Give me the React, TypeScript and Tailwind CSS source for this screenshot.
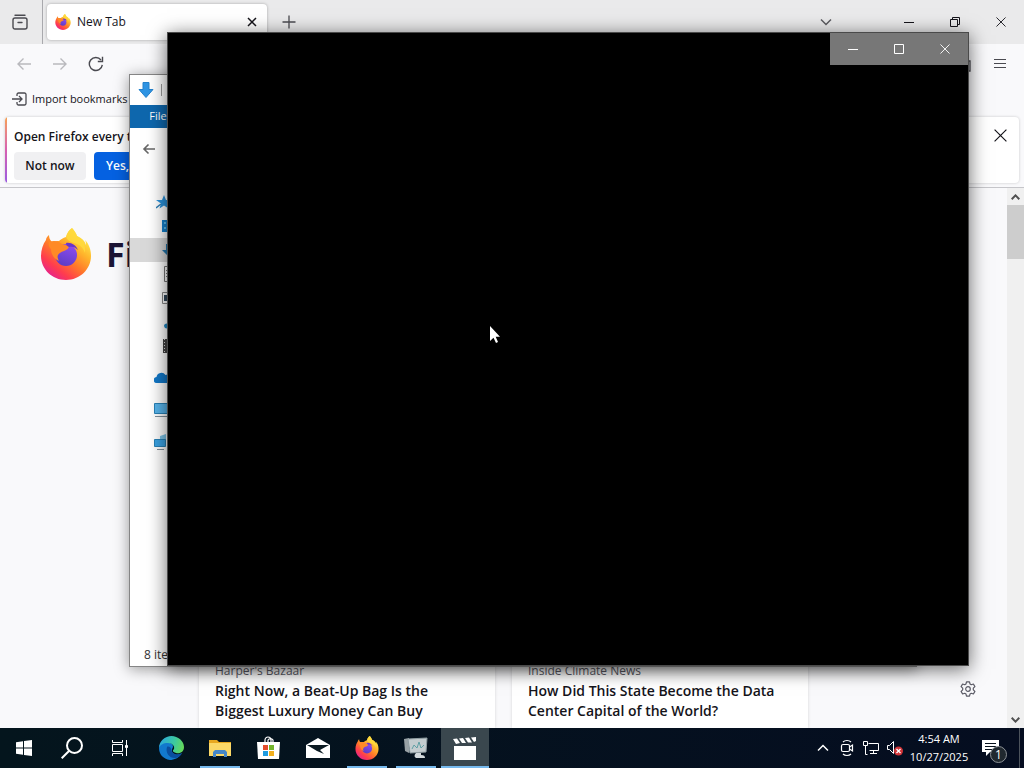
import React from "react";

interface IconProps {
  className?: string;
}

const FirefoxLogo = ({ className, id }: IconProps & { id: string }) => (
  <svg viewBox="0 0 52 52" className={className} aria-hidden="true">
    <defs>
      <linearGradient id={`${id}-body`} x1="0.85" y1="0.1" x2="0.2" y2="0.95">
        <stop offset="0" stopColor="#fff14f" />
        <stop offset="0.3" stopColor="#ffb52b" />
        <stop offset="0.55" stopColor="#ff7a2a" />
        <stop offset="0.8" stopColor="#ff3c4e" />
        <stop offset="1" stopColor="#e5238e" />
      </linearGradient>
      <linearGradient id={`${id}-globe`} x1="0.7" y1="0" x2="0.3" y2="1">
        <stop offset="0" stopColor="#8f4cf0" />
        <stop offset="1" stopColor="#5a3cc4" />
      </linearGradient>
    </defs>
    <path
      fill={`url(#${id}-body)`}
      d="M32 0c2 2 4 5 5 8 5 2 8 5 9 9 0-2 0-3-1-5 4 4 6 10 6 16 0 13-11 24-25 24S1 41 1 28c0-6 2-12 5-16 0-2 1-3 3-5 0 3 1 5 3 7 2-1 5-1 7-1 2-2 4-3 7-4 1-4 3-7 6-9z"
    />
    <circle cx="26" cy="27" r="11" fill={`url(#${id}-globe)`} />
    <path
      fill="#ff8a26"
      d="M9 14c5-2 9-1 13 2 2 1 5 1 7 2 0 2-2 4-5 5-3 1-5 2-6 4-1 2 0 4 1 6-5-2-8-7-8-12-2-2-3-4-2-7z"
    />
    <path fill="#ffd93c" d="M32 0c2 2 4 5 5 8 6 3 9 9 8 17-2-6-6-9-11-10-4-1-7-3-8-6 1-4 3-7 6-9z" opacity="0.85" />
    <path fill="#6a34c9" d="M26 15c5-1 10 2 12 7-3-3-6-4-9-3-2-1-3-2-3-4z" />
  </svg>
);

const Minimize = () => (
  <svg width="10" height="11" viewBox="0 0 10 11" stroke="currentColor">
    <path d="M0 5.500h10" />
  </svg>
);

const Close = ({ size = 10 }: { size?: number }) => (
  <svg width={size} height={size} viewBox="0 0 11 11" fill="none" stroke="currentColor">
    <path d="M.5.5l10 10M10.500.5l-10 10" />
  </svg>
);

const Chevron = ({ className }: IconProps) => (
  <svg width="12" height="8" viewBox="0 0 12 8" fill="none" stroke="currentColor" strokeWidth="1.500" className={className}>
    <path d="M1 1.500l5 5 5-5" />
  </svg>
);

const BackArrow = ({ className }: IconProps) => (
  <svg width="16" height="14" viewBox="0 0 16 14" fill="none" stroke="currentColor" strokeWidth="1.400" className={className}>
    <path d="M15 7H2M7.500 1.500L2 7l5.500 5.500" />
  </svg>
);

const TabBar = () => (
  <div className="flex h-11 shrink-0 bg-[#eaeaeb]">
    <button className="flex w-10 items-center justify-center text-[#4a4a50]" aria-label="Firefox View">
      <svg width="16" height="16" viewBox="0 0 16 16" fill="none" stroke="currentColor" strokeWidth="1.400">
        <path d="M3 1.200h10" strokeLinecap="round" />
        <rect x="1" y="4" width="14" height="11" rx="2" />
        <path d="M6 8.500h4" strokeLinecap="round" />
      </svg>
    </button>
    <div className="ml-0.5 w-px bg-[#a9a9ad]" />
    <div className="ml-1 mt-1 flex h-9 w-[220px] items-center rounded bg-white pl-2 pr-2.5 shadow-[0_0_3px_rgba(0,0,0,0.3)]">
      <FirefoxLogo id="tab" className="h-4 w-4" />
      <span className="ml-1.5 flex-1 text-[12px]">New Tab</span>
      <button aria-label="Close tab">
        <svg width="10" height="10" viewBox="0 0 10 10" stroke="currentColor" strokeWidth="1.500">
          <path d="M1 1l8 8M9 1L1 9" />
        </svg>
      </button>
    </div>
    <button className="ml-1 flex w-9 items-center justify-center" aria-label="New tab">
      <svg width="14" height="14" viewBox="0 0 14 14" stroke="#4a4a50" strokeWidth="1.300">
        <path d="M7 .5v13M.5 7h13" />
      </svg>
    </button>
    <div className="ml-auto flex">
      <button className="mr-10 flex w-10 items-center justify-center text-[#5b5b60]" aria-label="List all tabs">
        <Chevron />
      </button>
      <button className="flex w-[46px] items-center justify-center" aria-label="Minimize">
        <Minimize />
      </button>
      <button className="flex w-[46px] items-center justify-center" aria-label="Restore">
        <svg width="10" height="10" viewBox="0 0 10 10" fill="none" stroke="currentColor">
          <path d="M.5 2.500h7v7h-7zM2.500 2.500v-2h7v7h-2" />
        </svg>
      </button>
      <button className="flex w-[46px] items-center justify-center" aria-label="Close">
        <Close />
      </button>
    </div>
  </div>
);

const NavBar = () => (
  <div className="flex h-10 shrink-0 items-center pl-4 pr-[18px]">
    <button className="text-[#b9b9bd]" aria-label="Back">
      <BackArrow />
    </button>
    <button className="ml-5 text-[#b9b9bd]" aria-label="Forward">
      <BackArrow className="rotate-180" />
    </button>
    <button className="ml-5 text-[#4a4a50]" aria-label="Reload">
      <svg width="16" height="16" viewBox="0 0 16 16" fill="none" stroke="currentColor" strokeWidth="1.400">
        <path d="M14.300 8.800A6.500 6.500 0 1 1 13 4" />
        <path d="M14.500.8v4.700H9.800" />
      </svg>
    </button>
    <button className="ml-auto mr-[22px] text-[#4a4a50]" aria-label="Extensions">
      <svg width="16" height="16" viewBox="0 0 16 16" fill="none" stroke="currentColor" strokeWidth="1.300">
        <path d="M1 5h4V3a2 2 0 0 1 4 0v2h5v10H1v-3h2a2 2 0 0 0 0-4H1z" />
      </svg>
    </button>
    <button className="text-[#4a4a50]" aria-label="Open application menu">
      <svg width="12" height="12" viewBox="0 0 12 12" stroke="currentColor">
        <path d="M0 1.500h12M0 5.500h12M0 9.500h12" />
      </svg>
    </button>
  </div>
);

const Bookmarks = () => (
  <div className="flex h-[30px] shrink-0 items-center pl-3">
    <button className="flex items-center gap-1">
      <svg width="16" height="14" viewBox="0 0 16 14" fill="none" stroke="#4a4a50" strokeWidth="1.300">
        <path d="M5 4V2.500A1.500 1.500 0 0 1 6.500 1h6A1.500 1.500 0 0 1 14 2.500v9a1.500 1.500 0 0 1-1.500 1.500h-6A1.500 1.500 0 0 1 5 11.500V10M0 7h9.500M7 4l3 3-3 3" />
      </svg>
      <span className="text-[11px]">Import bookmarks</span>
    </button>
  </div>
);

const Notice = () => (
  <div className="shrink-0 border-b border-[#c6c6ca] px-[5px] pb-1 pt-[3px]">
    <div className="flex h-[66px] overflow-hidden rounded bg-white shadow-[0_0_3px_rgba(0,0,0,0.2)]">
      <div className="w-0.5 bg-linear-to-b from-[#f7a04c] via-[#d75fb0] to-[#9a59e0]" />
      <div className="ml-[7px] pt-2.5">
        <p className="text-[12px] font-semibold leading-5">Open Firefox every time</p>
        <div className="mt-[5px] flex gap-2 text-[12px] font-semibold">
          <button className="h-7 w-[72px] rounded bg-[#f0f0f2]">Not now</button>
          <button className="h-7 rounded bg-[#0561e1] px-3 text-white">Yes,</button>
        </div>
      </div>
      <button className="mb-auto ml-auto mr-3 mt-3" aria-label="Dismiss">
        <Close size={13} />
      </button>
    </div>
  </div>
);

const stories = [
  { source: "Harper's Bazaar", title: "Right Now, a Beat-Up Bag Is the Biggest Luxury Money Can Buy" },
  { source: "Inside Climate News", title: "How Did This State Become the Data Center Capital of the World?" },
];

const NewTabPage = () => (
  <div className="flex min-h-0 flex-1">
    <main className="relative flex min-w-0 flex-1 flex-col bg-[#f9f9fb]">
      <div className="flex items-center gap-[14px] pl-10 pt-10">
        <FirefoxLogo id="page" className="h-[52px] w-[52px]" />
        <span className="text-[34px] font-bold leading-[50px] text-[#1c1535]">Firefox</span>
      </div>
      <div className="mx-auto mt-auto grid w-full max-w-[609px] grid-cols-2 gap-[17px]">
        {stories.map((story) => (
          <article key={story.title} className="bg-white px-4 pb-[7px] pt-8 shadow-[0_0_3px_rgba(0,0,0,0.15)]">
            <p className="text-[12px] leading-5 text-[#5b5b66]">{story.source}</p>
            <h3 className="text-[14px] font-semibold leading-5 text-[#15141a]">{story.title}</h3>
          </article>
        ))}
      </div>
      <button className="absolute bottom-[31px] right-[31px] text-[#5b5b66]" aria-label="Customize">
        <svg width="16" height="16" viewBox="0 0 16 16" fill="none" stroke="currentColor" strokeWidth="1.200" strokeLinejoin="round">
          <path d="M6.500.8h3l.5 2.100 1.300.8 2.100-.7 1.500 2.600L13.300 7.200v1.600l1.600 1.600-1.500 2.600-2.100-.7-1.300.8-.5 2.100h-3L6 13.100l-1.300-.8-2.100.7-1.500-2.600 1.600-1.600V7.200L1.100 5.600 2.600 3l2.100.7L6 2.900z" />
          <circle cx="8" cy="8" r="2.300" />
        </svg>
      </button>
    </main>
    <div className="flex w-[17px] flex-col items-center justify-between bg-[#f0f0f0] text-[#505050]">
      <div className="flex w-full flex-col items-center">
        <button className="flex h-[17px] items-center" aria-label="Scroll up">
          <svg width="9" height="6" viewBox="0 0 9 6" fill="none" stroke="currentColor" strokeWidth="2">
            <path d="M.7 5.200l3.800-3.800 3.800 3.800" />
          </svg>
        </button>
        <div className="h-[54px] w-full bg-[#cdcdcd]" />
      </div>
      <button className="flex h-[17px] items-center" aria-label="Scroll down">
        <svg width="9" height="6" viewBox="0 0 9 6" fill="none" stroke="currentColor" strokeWidth="2">
          <path d="M.7.8l3.800 3.800L8.300.8" />
        </svg>
      </button>
    </div>
  </div>
);

const Browser = () => (
  <div className="flex min-h-0 flex-1 flex-col bg-[#f9f9fb] text-[#15141a]">
    <TabBar />
    <NavBar />
    <Bookmarks />
    <Notice />
    <NewTabPage />
  </div>
);

const treeIcons = {
  star: (
    <>
      <path fill="#2b93dc" d="M8 1l2 5h5l-4 3.500 1.500 5L8 11.500 3.500 14.500 5 9.500 0 6h6z" />
      <path stroke="#2b7fb8" strokeWidth="1.500" d="M0 14l5-4" />
    </>
  ),
  desktop: (
    <>
      <path fill="#1583d0" d="M0 2h16v12H0z" />
      <path fill="#5cc0f5" d="M2 4h2v2H2zM2 9h2v2H2z" />
    </>
  ),
  download: <path fill="#2478ae" d="M0 8h4V2h6v6h4l-7 7z" />,
  document: <path fill="#fff" stroke="#777" d="M2.500.5h11v15h-11zM4 4.500h7M4 7.500h7M4 10.500h7" />,
  picture: (
    <>
      <path fill="#fff" stroke="#888" d="M.5 2.500h15v11H.5z" />
      <path fill="#34495b" d="M2 5h12v6H2z" />
    </>
  ),
  music: <path fill="#218bc7" d="M2 12a3 2.500 0 1 1 3 2.500A3 3 0 0 1 2 12zM9 2h2v8H9z" />,
  video: (
    <>
      <path fill="#444" d="M1 1h14v14H1z" />
      <path stroke="#ddd" strokeDasharray="1 2" d="M2.500 1v14" />
    </>
  ),
  cloud: <path fill="#1278c8" d="M3 13a3 3 0 0 1-.500-6 5 5 0 0 1 9-2 4 4 0 0 1 3.500 8z" />,
  pc: (
    <>
      <path fill="#58b5ec" stroke="#2881b5" d="M.5 1.500h15v10H.5z" />
      <path stroke="#81909b" d="M1 14.500h14" />
    </>
  ),
  network: (
    <>
      <path fill="#7dc4e8" d="M6 2l6-2v12H6z" />
      <path fill="#3aa2e3" stroke="#2881b5" d="M.5 5.500h11v7H.5z" />
      <path stroke="#81909b" d="M3 15.500h7" />
    </>
  ),
};

interface TreeItem {
  icon: keyof typeof treeIcons;
  className: string;
}

const tree: TreeItem[] = [
  { icon: "star", className: "pl-[26px]" },
  { icon: "desktop", className: "pl-8" },
  { icon: "download", className: "pl-8 bg-[#d9d9d9]" },
  { icon: "document", className: "pl-8" },
  { icon: "picture", className: "pl-8" },
  { icon: "music", className: "pl-8" },
  { icon: "video", className: "pl-8" },
  { icon: "cloud", className: "mt-2 pl-6" },
  { icon: "pc", className: "mt-2 pl-6" },
  { icon: "network", className: "mt-2 pl-6" },
];

const Explorer = () => (
  <section className="absolute left-[129px] top-[74px] flex h-[593px] w-[788px] flex-col border border-[#858585] bg-white shadow-[0_2px_14px_rgba(0,0,0,0.4)]">
    <div className="flex h-[30px] items-center pl-2">
      <svg width="16" height="16" viewBox="0 0 16 16" fill="#2f95e4" stroke="#2482cd">
        <path d="M5 .5h6v7h4L8 15.500 1 7.500h4z" />
      </svg>
      <div className="ml-[7px] h-3 w-px bg-[#9a9a9a]" />
    </div>
    <div className="flex h-[23px] text-[11px] text-white">
      <button className="w-14 bg-[#0e67ad]">File</button>
    </div>
    <div className="flex h-[42px] items-center pl-3 text-[#666]">
      <button aria-label="Back">
        <svg width="14" height="12" viewBox="0 0 14 12" fill="none" stroke="currentColor" strokeWidth="1.600">
          <path d="M13 6H2M6.500 1.500L2 6l4.500 4.500" />
        </svg>
      </button>
    </div>
    <ul className="mt-5 flex-1">
      {tree.map((item) => (
        <li key={item.icon} className={`flex h-6 w-[200px] items-center ${item.className}`}>
          <svg width="16" height="16" viewBox="0 0 16 16">
            {treeIcons[item.icon]}
          </svg>
        </li>
      ))}
    </ul>
    <div className="flex h-[22px] items-center pl-3.5 text-[12px] text-[#333]">8 items</div>
  </section>
);

const VideoWindow = () => (
  <section className="absolute left-[167px] top-8 h-[634px] w-[802px] border border-[#4a4a4a] bg-black shadow-[0_3px_18px_rgba(0,0,0,0.6)]">
    <div className="flex h-8 justify-end text-white">
      <button className="flex w-[46px] items-center justify-center bg-[#777]" aria-label="Minimize">
        <Minimize />
      </button>
      <button className="flex w-[46px] items-center justify-center bg-[#777]" aria-label="Maximize">
        <svg width="10" height="10" viewBox="0 0 10 10" fill="none" stroke="currentColor">
          <path d="M.5.5h9v9h-9z" />
        </svg>
      </button>
      <button className="flex w-[46px] items-center justify-center bg-[#777]" aria-label="Close">
        <Close />
      </button>
    </div>
  </section>
);

const Cursor = () => (
  <svg className="absolute left-[489px] top-[325px]" width="12" height="19" viewBox="0 0 12 19" aria-hidden="true">
    <path fill="#fff" d="M1 1v15l3.500-3.300L7 18l2-.900-2.300-5.300H11z" />
  </svg>
);

const StartIcon = () => (
  <svg width="16" height="16" viewBox="0 0 16 16" fill="#fff">
    <path d="M0 2.200l7-1v6.300H0zM8 1.100L16 0v7.500H8zM0 8.500h7v6.300l-7-1zM8 8.500h8V16l-8-1.100z" />
  </svg>
);

const SearchIcon = () => (
  <svg width="22" height="22" viewBox="0 0 22 22" fill="none" stroke="#fff" strokeWidth="2">
    <circle cx="13.500" cy="8.500" r="7.500" />
    <path d="M8 14l-7.300 7.300" />
  </svg>
);

const TaskViewIcon = () => (
  <svg width="16" height="16" viewBox="0 0 16 16" fill="none" stroke="#fff">
    <path d="M.5 0v2.500h10V0M.5 16v-2.500h10V16M.5 4.500h10v7H.5zM14.500 0v16" />
    <path fill="#fff" d="M13.500 5.500h2v2h-2z" />
  </svg>
);

const EdgeIcon = () => (
  <svg width="25" height="24" viewBox="0 0 25 24">
    <defs>
      <linearGradient id="edge-top" x1="0" y1="0.300" x2="1" y2="0.500">
        <stop offset="0" stopColor="#2aa7e0" />
        <stop offset="0.6" stopColor="#3cc9a0" />
        <stop offset="1" stopColor="#65d95a" />
      </linearGradient>
    </defs>
    <path fill="#1279cd" d="M0 12C1 6 7 5 11 7c3 1 4 4 2 6-1 6 5 7 10 4-3 5-8 7-12 7C4 23 0 18 0 12z" />
    <path fill="url(#edge-top)" d="M0 12C0 5 6 0 12.500 0S25 5 25 11c0 5-4 7-8 6-3-1-4-2-2-4 1-3-2-6-6-6-5 0-8 2-9 5z" />
    <path fill="#0a4f9f" d="M8 11c-2 6 3 12 9 11 3-1 5-3 6-5-5 3-10 1-11-4 0-2-3-3-4-2z" />
  </svg>
);

const FolderIcon = () => (
  <svg width="22" height="18" viewBox="0 0 22 18">
    <path fill="#e8a820" d="M0 1h8l2 2h12v14H0z" />
    <path fill="#fbd867" d="M0 4h22v13H0z" />
    <path fill="#4687c8" d="M4 18v-5l2-2h10l2 2v5h-3v-3H7v3z" />
  </svg>
);

const StoreIcon = () => (
  <svg width="24" height="24" viewBox="0 0 24 24">
    <path d="M8 8V4a3 3 0 0 1 6 0v4M11 7V4a3 3 0 0 1 5 0v3" fill="none" stroke="#fff" strokeWidth="1.200" />
    <path fill="#fff" d="M0 6h23l-1 17H1z" />
    <path fill="#e34b2b" d="M6 9h5v5H6z" />
    <path fill="#74b52c" d="M12 9h5v5h-5z" />
    <path fill="#1e9be0" d="M6 15h5v5H6z" />
    <path fill="#f2b01e" d="M12 15h5v5h-5z" />
  </svg>
);

const MailIcon = () => (
  <svg width="24" height="20" viewBox="0 0 24 20">
    <path fill="#fff" d="M0 7l12-7 12 7v13H0z" />
    <path fill="#0b1a22" d="M1 7h22l-9 5 4 4-7-3z" />
  </svg>
);

const MonitorIcon = () => (
  <svg width="24" height="22" viewBox="0 0 24 22">
    <path fill="#98a1a5" d="M0 2l5-1v15l-4-2z" />
    <path fill="#c3cccf" stroke="#8f9da2" d="M4 2l19-1-1 14-16 1z" />
    <path fill="none" stroke="#5fa0a5" d="M8 12l2-4 3 3 2-6 2 6 3-3" />
    <path fill="#d3dadd" d="M12 16h5v2c3 0 4 1 4 3h-9c-2-1-2-3 0-5z" />
  </svg>
);

const ClapperIcon = () => (
  <svg width="24" height="23" viewBox="0 0 24 23" fill="#fff">
    <path d="M1 9h22v14H1z" />
    <path d="M0 2l4-.500L7 6l-4 1zM6 1.500L10 1l3 5H9zM12 1l4-.500 3 5H15zM18 .5L23 0v4l-2 1z" />
  </svg>
);

interface TaskItem {
  label: string;
  icon: React.ReactNode;
  open?: boolean;
  active?: boolean;
}

const systemItems: TaskItem[] = [
  { label: "Start", icon: <StartIcon /> },
  { label: "Search", icon: <SearchIcon /> },
  { label: "Task View", icon: <TaskViewIcon /> },
];

const apps: TaskItem[] = [
  { label: "Microsoft Edge", icon: <EdgeIcon /> },
  { label: "File Explorer", icon: <FolderIcon />, open: true },
  { label: "Microsoft Store", icon: <StoreIcon /> },
  { label: "Mail", icon: <MailIcon /> },
  { label: "Firefox", icon: <FirefoxLogo id="task" className="h-6 w-6" />, open: true },
  { label: "Resource Monitor", icon: <MonitorIcon />, open: true },
  { label: "Movies", icon: <ClapperIcon />, open: true, active: true },
];

const Taskbar = () => (
  <footer className="z-10 flex h-10 shrink-0 bg-linear-to-r from-[#04151d] to-[#050d20] text-white">
    {systemItems.map((item) => (
      <button key={item.label} aria-label={item.label} className="flex w-12 items-center justify-center">
        {item.icon}
      </button>
    ))}
    <div className="ml-[3px] flex gap-px">
      {apps.map((item) => (
        <button
          key={item.label}
          aria-label={item.label}
          className={`flex w-12 flex-col items-center ${item.active ? "bg-[#3a474e]" : ""}`}
        >
          <span className="flex flex-1 items-center">{item.icon}</span>
          {item.open && <span className={`-mt-0.5 h-0.5 bg-[#76b9ed] ${item.active ? "w-full" : "w-10"}`} />}
        </button>
      ))}
    </div>
    <div className="ml-auto flex items-center">
      <button aria-label="Show hidden icons" className="flex w-6 justify-center">
        <Chevron className="rotate-180" />
      </button>
      <button aria-label="Meet Now" className="flex w-6 justify-center">
        <svg width="14" height="18" viewBox="0 0 14 18" fill="none" stroke="#fff" strokeWidth="1.200">
          <path d="M3 3c2-2 6-2 8 0M3 15c2 2 6 2 8 0" />
          <rect x="1.500" y="5.500" width="8" height="7" rx="1.500" />
          <path d="M9.500 8l3-2v6l-3-2" />
        </svg>
      </button>
      <button aria-label="Network" className="flex w-6 justify-center">
        <svg width="16" height="14" viewBox="0 0 16 14" fill="none" stroke="#fff">
          <path d="M5.500 2.500h10v7h-9M.5.5h4v4h-4zM2.500 4.500v9h2M7 12.500h7M10.500 9.500v3" />
        </svg>
      </button>
      <button aria-label="Volume muted" className="flex w-6 justify-center">
        <svg width="16" height="16" viewBox="0 0 16 16">
          <path fill="none" stroke="#fff" d="M.5 5.500h2l4-4v12l-4-4h-2z" />
          <circle cx="11.500" cy="11" r="4.500" fill="#d13438" />
          <path stroke="#fff" strokeWidth="1.300" d="M9.500 9l4 4M13.500 9l-4 4" />
        </svg>
      </button>
      <button className="w-[64px] text-center text-[11px] leading-[18px]">
        4:54 AM
        <br />
        10/27/2025
      </button>
      <button aria-label="1 new notification" className="relative ml-[11px] flex h-10 w-[37px] items-start pt-3">
        <svg width="17" height="16" viewBox="0 0 17 16">
          <path fill="#fff" d="M0 0h17v12H8l-4 4v-4H0z" />
          <path stroke="#07111c" d="M3 3.500h11M3 6.500h11M3 9.500h8" />
        </svg>
        <span className="absolute left-2 top-[18px] flex h-[17px] w-[17px] items-center justify-center rounded-full border border-[#8c9196] bg-[#20282f] text-[12px]">
          1
        </span>
      </button>
      <div className="h-10 w-[5px] border-l border-[#4c535c]" />
    </div>
  </footer>
);

const App = () => {
  return (
    <div className="relative flex h-screen flex-col overflow-hidden font-['Open_Sans','Noto_Sans',sans-serif] text-[12px]">
      <Browser />
      <Explorer />
      <VideoWindow />
      <Cursor />
      <Taskbar />
    </div>
  );
};

export default App;
